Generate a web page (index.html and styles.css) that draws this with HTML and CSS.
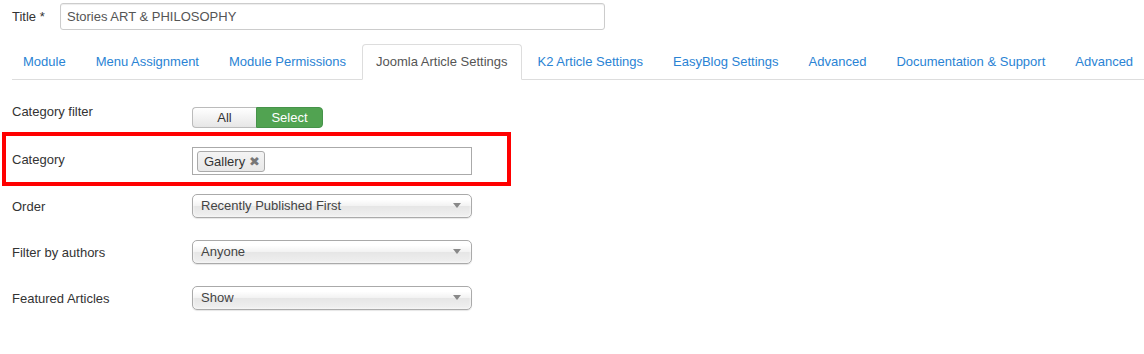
FILE: index.html
```html
<!DOCTYPE html>
<html>
<head>
<meta charset="utf-8">
<link rel="stylesheet" href="styles.css">
</head>
<body>
<div class="page">
  <div class="title-row">
    <label class="title-label">Title *</label>
    <div class="title-input">Stories ART &amp; PHILOSOPHY</div>
  </div>
  <ul class="tabs">
    <li class="tab">Module</li>
    <li class="tab">Menu Assignment</li>
    <li class="tab">Module Permissions</li>
    <li class="tab active">Joomla Article Settings</li>
    <li class="tab">K2 Article Settings</li>
    <li class="tab">EasyBlog Settings</li>
    <li class="tab">Advanced</li>
    <li class="tab">Documentation &amp; Support</li>
    <li class="tab">Advanced</li>
  </ul>
  <div class="form">
    <div class="row row-toggle">
      <div class="label">Category filter</div>
      <div class="toggle">
        <span class="tbtn tbtn-all">All</span>
        <span class="tbtn tbtn-sel">Select</span>
      </div>
    </div>
    <div class="highlight">
      <div class="row row-cat">
        <div class="label">Category</div>
        <div class="multi">
          <span class="chip">Gallery <span class="chip-x">✖</span></span>
        </div>
      </div>
    </div>
    <div class="row row-select">
      <div class="label">Order</div>
      <div class="select"><span>Recently Published First</span><span class="arrow"></span></div>
    </div>
    <div class="row row-select">
      <div class="label">Filter by authors</div>
      <div class="select"><span>Anyone</span><span class="arrow"></span></div>
    </div>
    <div class="row row-select">
      <div class="label">Featured Articles</div>
      <div class="select"><span>Show</span><span class="arrow"></span></div>
    </div>
  </div>
</div>
</body>
</html>
```

FILE: styles.css
```css
html, body {
  margin: 0;
  padding: 0;
  background: #fff;
}
body {
  font-family: "Liberation Sans", Arial, sans-serif;
  font-size: 13px;
  color: #333;
}
.page {
  width: 1144px;
  height: 354px;
  overflow: hidden;
}
.title-row {
  display: flex;
  align-items: center;
  padding-top: 3px;
  padding-left: 12px;
}
.title-label {
  width: 48px;
  line-height: 18px;
}
.title-input {
  box-sizing: border-box;
  width: 545px;
  height: 27px;
  border: 1px solid #ccc;
  border-radius: 3px;
  padding: 0 6px;
  line-height: 25px;
  color: #555;
  box-shadow: inset 0 1px 1px rgba(0,0,0,0.075);
}
.tabs {
  list-style: none;
  margin: 14px 0 0 12px;
  padding: 0;
  display: flex;
  border-bottom: 1px solid #ddd;
  height: 35px;
}
.tab {
  box-sizing: border-box;
  height: 36px;
  padding: 0 13px;
  margin-right: 2px;
  line-height: 34px;
  color: #2a83d4;
  border: 1px solid transparent;
  border-radius: 4px 4px 0 0;
  white-space: nowrap;
}
.tab:first-child {
  padding-left: 10px;
}
.tab.active {
  color: #555;
  background: #fff;
  border-color: #ddd #ddd transparent;
}
.form {
  padding-top: 23px;
}
.row {
  display: flex;
  padding-left: 12px;
}
.label {
  width: 180px;
  flex: none;
  line-height: 18px;
}
.row-toggle {
  height: 29px;
  align-items: flex-start;
}
.toggle {
  display: flex;
  margin-top: 4px;
  height: 21px;
}
.tbtn {
  box-sizing: border-box;
  height: 21px;
  line-height: 19px;
  text-align: center;
  font-size: 13px;
}
.tbtn-all {
  width: 64px;
  color: #333;
  border: 1px solid #bbb;
  border-right: none;
  border-radius: 4px 0 0 4px;
  background: linear-gradient(#fff, #e6e6e6);
}
.tbtn-sel {
  width: 67px;
  color: #fff;
  background: #51a351;
  border: 1px solid #46934a;
  border-radius: 0 4px 4px 0;
}
.highlight {
  box-sizing: border-box;
  width: 509px;
  height: 54px;
  margin-left: 2px;
  border: 4px solid #ff0000;
  padding-top: 11px;
}
.highlight .row {
  padding-left: 6px;
  align-items: center;
}
.highlight .label {
  padding-bottom: 2px;
}
.multi {
  box-sizing: border-box;
  width: 280px;
  height: 28px;
  border: 1px solid #aaa;
  background: #fff;
  display: flex;
  align-items: center;
  padding-left: 4px;
}
.chip {
  box-sizing: border-box;
  height: 21px;
  line-height: 19px;
  padding: 0 4px 0 6px;
  border: 1px solid #aaa;
  border-radius: 3px;
  background: linear-gradient(#f4f4f4, #e8e8e8);
  color: #333;
  white-space: nowrap;
}
.chip-x {
  font-size: 13px;
  color: #777;
  margin-left: 0;
}
.row-select {
  align-items: center;
  margin-top: 8px;
  height: 24px;
}
.row-select .label {
  padding-top: 1px;
}
.row-select + .row-select {
  margin-top: 22px;
}
.select {
  box-sizing: border-box;
  width: 280px;
  height: 24px;
  border: 1px solid #aaa;
  border-radius: 5px;
  background: linear-gradient(#ffffff 20%, #f2f2f2 50%, #e6e6e6 52%, #f0f0f0 100%);
  box-shadow: 0 0 3px #fff inset, 0 1px 1px rgba(0,0,0,0.1);
  display: flex;
  align-items: center;
  justify-content: space-between;
  padding: 0 10px 1px 8px;
  color: #444;
}
.arrow {
  width: 0;
  height: 0;
  border-left: 4px solid transparent;
  border-right: 4px solid transparent;
  border-top: 5px solid #888;
}
```
